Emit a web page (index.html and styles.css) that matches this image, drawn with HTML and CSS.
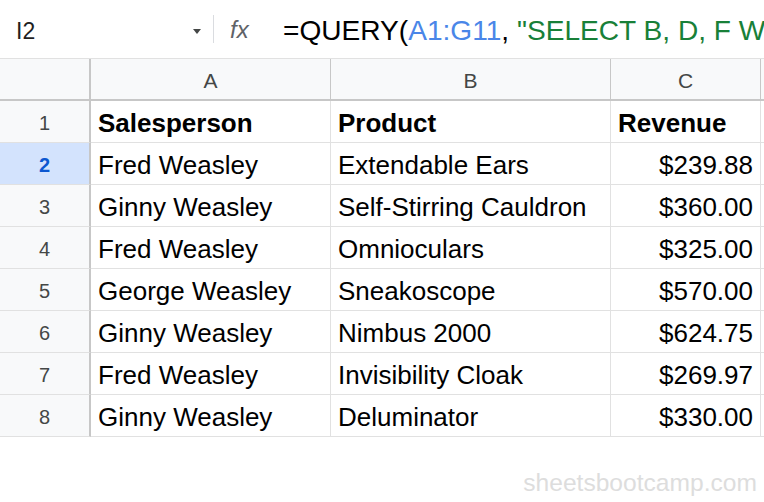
FILE: index.html
```html
<!DOCTYPE html>
<html>
<head>
<meta charset="utf-8">
<link rel="stylesheet" href="styles.css">
</head>
<body>
<div class="app">
  <div class="formula-bar">
    <div class="name-box">
      <span class="cell-ref">I2</span>
      <svg class="caret" width="8" height="5" viewBox="0 0 8 5"><path d="M0 0 L8 0 L4 5 Z" fill="#444746"/></svg>
    </div>
    <div class="divider"></div>
    <div class="fx">fx</div>
    <div class="formula"><span class="f-black">=QUERY(</span><span class="f-blue">A1:G11</span><span class="f-black">, </span><span class="f-green">"SELECT B, D, F WHERE C = 'Fred Weasley'"</span></div>
  </div>
  <div class="grid">
    <div class="corner hdr"></div>
    <div class="colhdr hdr">A</div>
    <div class="colhdr hdr">B</div>
    <div class="colhdr hdr">C</div>
    <div class="colhdr hdr last"></div>

    <div class="rowhdr">1</div>
    <div class="cell bold">Salesperson</div>
    <div class="cell bold">Product</div>
    <div class="cell bold">Revenue</div>
    <div class="cell"></div>

    <div class="rowhdr sel">2</div>
    <div class="cell">Fred Weasley</div>
    <div class="cell">Extendable Ears</div>
    <div class="cell num">$239.88</div>
    <div class="cell"></div>

    <div class="rowhdr">3</div>
    <div class="cell">Ginny Weasley</div>
    <div class="cell">Self-Stirring Cauldron</div>
    <div class="cell num">$360.00</div>
    <div class="cell"></div>

    <div class="rowhdr">4</div>
    <div class="cell">Fred Weasley</div>
    <div class="cell">Omnioculars</div>
    <div class="cell num">$325.00</div>
    <div class="cell"></div>

    <div class="rowhdr">5</div>
    <div class="cell">George Weasley</div>
    <div class="cell">Sneakoscope</div>
    <div class="cell num">$570.00</div>
    <div class="cell"></div>

    <div class="rowhdr">6</div>
    <div class="cell">Ginny Weasley</div>
    <div class="cell">Nimbus 2000</div>
    <div class="cell num">$624.75</div>
    <div class="cell"></div>

    <div class="rowhdr">7</div>
    <div class="cell">Fred Weasley</div>
    <div class="cell">Invisibility Cloak</div>
    <div class="cell num">$269.97</div>
    <div class="cell"></div>

    <div class="rowhdr">8</div>
    <div class="cell">Ginny Weasley</div>
    <div class="cell">Deluminator</div>
    <div class="cell num">$330.00</div>
    <div class="cell"></div>
  </div>
  <div class="watermark">sheetsbootcamp.com</div>
</div>
</body>
</html>
```

FILE: styles.css
```css
* { box-sizing: border-box; }
html, body { margin: 0; padding: 0; background: #fff; }
body { font-family: "Liberation Sans", Arial, sans-serif; width: 764px; height: 502px; overflow: hidden; }
.app { position: relative; width: 764px; height: 502px; }

.formula-bar {
  height: 59px;
  padding-top: 4px;
  border-bottom: 1px solid #e1e1e1;
  display: flex;
  align-items: center;
  white-space: nowrap;
  overflow: hidden;
}
.name-box {
  flex: none;
  width: 213px;
  display: flex;
  align-items: center;
  justify-content: space-between;
  padding-left: 16px;
  padding-right: 12px;
}
.cell-ref { font-size: 23px; color: #1f1f1f; }
.caret { margin-top: 0; }
.divider { flex: none; width: 1px; height: 28px; margin-top: -4px; background: #dadce0; }
.fx {
  flex: none;
  font-style: italic;
  font-size: 24px;
  color: #5f6368;
  width: 69px;
  padding-left: 16px;
  padding-bottom: 3px;
}
.formula { flex: none; font-size: 28.1px; }
.f-black { color: #000; }
.f-blue { color: #4a86e8; }
.f-green { color: #188038; }

.grid {
  display: grid;
  grid-template-columns: 91px 240px 280px 150px 40px;
  grid-auto-rows: 42px;
}
.hdr {
  background: #f8f9fa;
  border-bottom: 2px solid #c7c7c7;
  border-right: 1px solid #c7c7c7;
  height: 42px;
}
.corner { border-right: 2px solid #c7c7c7; }
.colhdr {
  display: flex;
  align-items: center;
  justify-content: center;
  font-size: 21px;
  color: #444746;
  padding-top: 4px;
}
.rowhdr {
  background: #f8f9fa;
  border-right: 2px solid #c7c7c7;
  border-bottom: 1px solid #e1e1e1;
  display: flex;
  align-items: center;
  justify-content: center;
  font-size: 20px;
  color: #444746;
  padding-top: 3px;
}
.rowhdr.sel {
  background: #d3e3fd;
  color: #0b57d0;
  font-weight: bold;
}
.cell {
  border-right: 1px solid #e1e1e1;
  border-bottom: 1px solid #e1e1e1;
  display: flex;
  align-items: center;
  padding: 3px 7px 0;
  font-size: 26px;
  color: #000;
  white-space: nowrap;
  overflow: hidden;
}
.cell.bold { font-weight: bold; }
.cell.num { justify-content: flex-end; }

.watermark {
  position: absolute;
  right: 7px;
  bottom: 5px;
  font-size: 24.6px;
  color: #dddddd;
}
```
